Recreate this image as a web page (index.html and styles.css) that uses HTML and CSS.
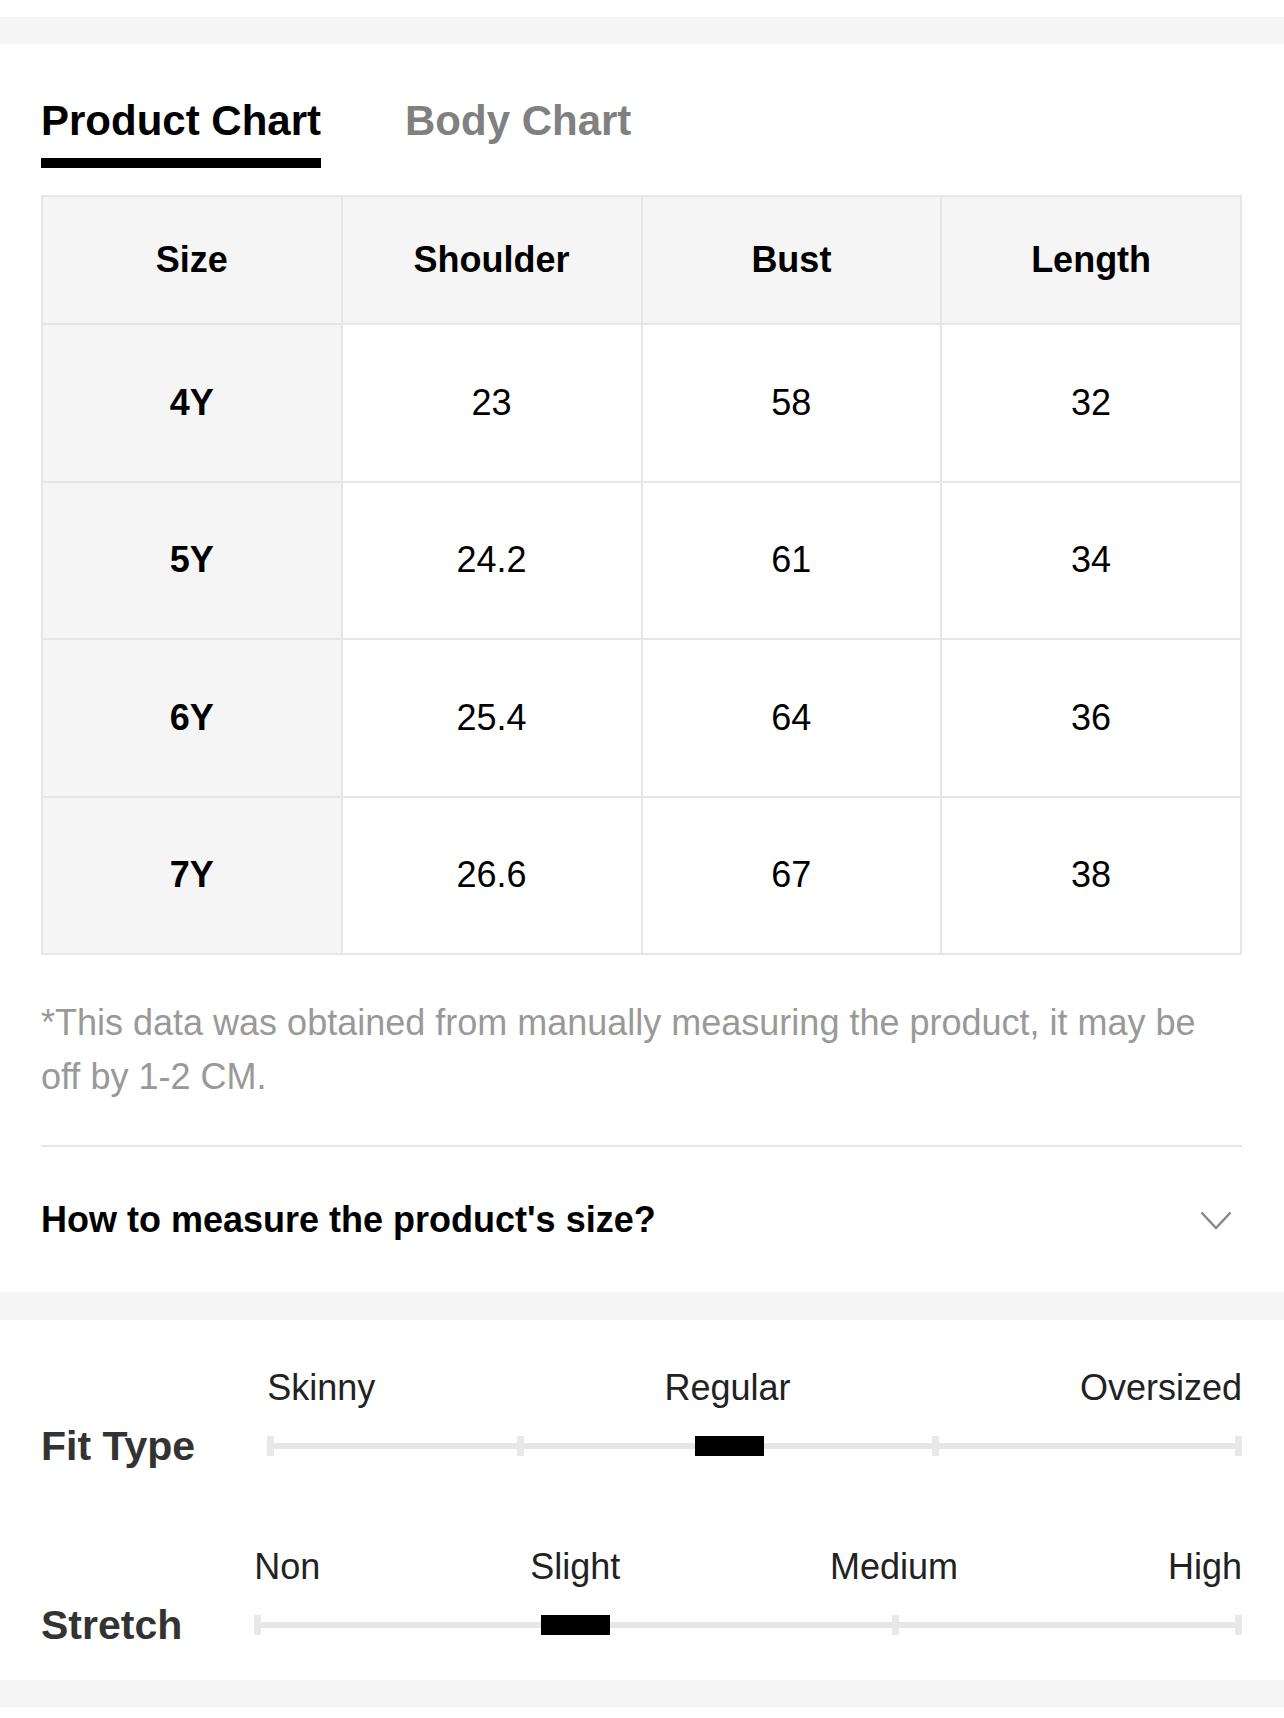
FILE: index.html
```html
<!DOCTYPE html>
<html lang="en">
<head>
<meta charset="utf-8">
<title>Size Chart</title>
<link rel="stylesheet" href="styles.css">
</head>
<body>
<div class="band band-top"></div>
<section class="chart">
  <div class="tabs">
    <div class="tab active">Product Chart</div>
    <div class="tab">Body Chart</div>
  </div>
  <table class="size-table">
    <colgroup><col><col><col><col></colgroup>
    <tr class="head-row"><th>Size</th><th>Shoulder</th><th>Bust</th><th>Length</th></tr>
    <tr class="body-row"><th class="size">4Y</th><td>23</td><td>58</td><td>32</td></tr>
    <tr class="body-row"><th class="size">5Y</th><td>24.2</td><td>61</td><td>34</td></tr>
    <tr class="body-row"><th class="size">6Y</th><td>25.4</td><td>64</td><td>36</td></tr>
    <tr class="body-row"><th class="size">7Y</th><td>26.6</td><td>67</td><td>38</td></tr>
  </table>
  <p class="note">*This data was obtained from manually measuring the product, it may be off by 1-2 CM.</p>
  <div class="accordion">
    <span class="accordion-title">How to measure the product's size?</span>
    <svg class="chevron" width="32" height="19" viewBox="0 0 32 19"><polyline points="1.5,1.5 16,17 30.5,1.5" fill="none" stroke="#888" stroke-width="2.5"/></svg>
  </div>
</section>
<div class="band band-mid"></div>
<section class="fit">
  <div class="fit-row">
    <div class="fit-title">Fit Type</div>
    <div class="scale">
      <div class="labels"><span>Skinny</span><span>Regular</span><span>Oversized</span></div>
      <div class="track">
        <span class="tick" style="left:0%"></span>
        <span class="tick" style="left:25.6%"></span>
        <span class="tick" style="left:68.2%"></span>
        <span class="tick tick-end"></span>
        <span class="marker" style="left:47.4%"></span>
      </div>
    </div>
  </div>
  <div class="fit-row">
    <div class="fit-title">Stretch</div>
    <div class="scale">
      <div class="labels"><span>Non</span><span>Slight</span><span>Medium</span><span>High</span></div>
      <div class="track">
        <span class="tick" style="left:0%"></span>
        <span class="tick" style="left:64.6%"></span>
        <span class="tick tick-end"></span>
        <span class="marker" style="left:32.5%"></span>
      </div>
    </div>
  </div>
</section>
<div class="band band-bottom"></div>
</body>
</html>
```

FILE: styles.css
```css
* { box-sizing: border-box; }
html, body { margin: 0; padding: 0; background: #fff; }
body {
  font-family: "Liberation Sans", Arial, Helvetica, sans-serif;
  color: #000;
  width: 1284px;
}
.band { background: #f5f5f5; }
.band-top { margin-top: 17px; height: 27px; }
.band-mid { height: 28px; }
.band-bottom { height: 27px; }

.chart { padding: 53px 42px 0 41px; }
.tabs { display: flex; gap: 84px; }
.tab {
  font-size: 42px;
  font-weight: 700;
  line-height: 48px;
  color: #808080;
  padding-bottom: 13px;
  border-bottom: 10px solid transparent;
}
.tab.active { color: #000; border-bottom-color: #000; }

.size-table {
  margin-top: 27px;
  width: 100%;
  border-collapse: collapse;
  table-layout: fixed;
  border: 2px solid #e6e6e6;
}
.size-table th, .size-table td {
  border: 2px solid #e6e6e6;
  text-align: center;
  vertical-align: middle;
  font-size: 36px;
  padding: 0;
}
.size-table th { font-weight: 700; background: #f5f5f5; }
.size-table td { font-weight: 400; background: #fff; }
.head-row { height: 128px; }
.body-row { height: 157.5px; }

.note {
  margin: 41px 0 0 0;
  font-size: 36px;
  line-height: 54px;
  color: #999;
}
.accordion {
  margin-top: 41px;
  border-top: 2px solid #e6e6e6;
  height: 147px;
  display: flex;
  align-items: center;
  justify-content: space-between;
}
.accordion-title { font-size: 36px; font-weight: 700; }
.chevron { margin-right: 10px; margin-top: 2px; }

.fit { padding: 47px 42px 45px 41px; }
.fit-row { display: flex; align-items: flex-end; }
.fit-row + .fit-row { margin-top: 90px; }
.fit-title {
  font-size: 41px;
  font-weight: 700;
  line-height: 20px;
  color: #333;
  margin-right: 72px;
  white-space: nowrap;
}
.scale { flex: 1; }
.labels {
  display: flex;
  justify-content: space-between;
  font-size: 36px;
  line-height: 42px;
  color: #222;
}
.track {
  position: relative;
  margin-top: 27px;
  height: 20px;
  background: linear-gradient(#e6e6e6, #e6e6e6) center / 100% 6px no-repeat;
}
.tick {
  position: absolute;
  top: 0;
  width: 7px;
  height: 20px;
  background: #e8e8e8;
}
.tick-end { right: 0; }
.marker {
  position: absolute;
  top: 0;
  width: 69px;
  height: 20px;
  margin-left: -34px;
  background: #000;
}
```
